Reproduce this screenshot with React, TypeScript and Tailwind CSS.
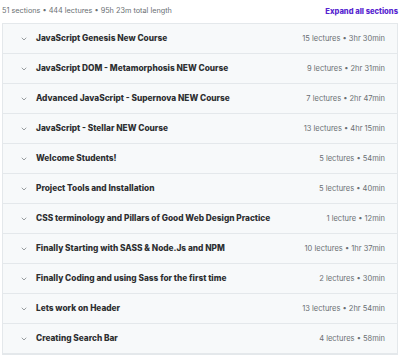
import { ChevronDown } from "lucide-react";

const sections = [
  { title: "JavaScript Genesis New Course", meta: "15 lectures • 3hr 30min" },
  { title: "JavaScript DOM - Metamorphosis NEW Course", meta: "9 lectures • 2hr 31min" },
  { title: "Advanced JavaScript - Supernova NEW Course", meta: "7 lectures • 2hr 47min" },
  { title: "JavaScript - Stellar NEW Course", meta: "13 lectures • 4hr 15min" },
  { title: "Welcome Students!", meta: "5 lectures • 54min" },
  { title: "Project Tools and Installation", meta: "5 lectures • 40min" },
  { title: "CSS terminology and Pillars of Good Web Design Practice", meta: "1 lecture • 12min" },
  { title: "Finally Starting with SASS & Node.Js and NPM", meta: "10 lectures • 1hr 37min" },
  { title: "Finally Coding and using Sass for the first time", meta: "2 lectures • 30min" },
  { title: "Lets work on Header", meta: "13 lectures • 2hr 54min" },
  { title: "Creating Search Bar", meta: "4 lectures • 58min" },
];

export default function App() {
  return (
    <div className="w-[400px] h-[357px] bg-white overflow-hidden font-['Inter',sans-serif] text-[#2d2f31]">
      <div className="flex items-center justify-between h-[23px] pl-[2px] pr-[2px]">
        <span className="text-[7.3px] text-[#6a6f73]">51 sections • 444 lectures • 95h 23m total length</span>
        <span className="text-[7.6px] font-extrabold text-[#5624d0]">Expand all sections</span>
      </div>
      <div className="ml-[2px] mr-[2px] border border-[#e4e8eb]">
        {sections.map((s) => (
          <div
            key={s.title}
            className="flex items-center h-[30px] bg-[#f7f9fa] border-b border-[#e4e8eb] pl-[17px] pr-[12px]"
          >
            <ChevronDown className="w-[8px] h-[8px] text-[#6a6f73] mr-[8px]" strokeWidth={2} />
            <span className="text-[8.3px] font-extrabold flex-1">{s.title}</span>
            <span className="text-[7.5px] text-[#6a6f73]">{s.meta}</span>
          </div>
        ))}
      </div>
    </div>
  );
}
